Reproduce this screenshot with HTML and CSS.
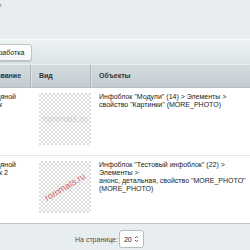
FILE: index.html
```html
<!DOCTYPE html>
<html lang="ru">
<head>
    <meta charset="UTF-8">
    <title>Водяные знаки</title>
    <link rel="stylesheet" href="styles.css">
</head>
<body>
    <div class="page">
        <div class="crumbs">Настройки</div>

        <div class="toolbar">
            <span class="tab-button">Разработка</span>
        </div>

        <div class="grid">
            <div class="grid-head">
                <div class="head-cell">Название</div>
                <div class="head-cell">Вид</div>
                <div class="head-cell">Объекты</div>
            </div>

            <div class="grid-row">
                <div class="cell">Водяной<br>знак</div>
                <div class="cell">
                    <div class="preview">
                        <span class="mark mark-flat">rommats.ru</span>
                    </div>
                </div>
                <div class="cell cell-objects">Инфоблок "Модули" (14) &gt; Элементы &gt;<br>свойство "Картинки" (MORE_PHOTO)</div>
            </div>

            <div class="grid-row">
                <div class="cell">Водяной<br>знак 2</div>
                <div class="cell">
                    <div class="preview">
                        <span class="mark mark-tilt">rommats.ru</span>
                    </div>
                </div>
                <div class="cell cell-objects">Инфоблок "Тестовый инфоблок" (22) &gt;<br>Элементы &gt;<br>анонс, детальная, свойство "MORE_PHOTO"<br>(MORE_PHOTO)</div>
            </div>
        </div>

        <div class="pager">
            <span class="pager-label">На странице:</span>
            <span class="pager-select">20
                <svg width="5" height="8" viewBox="0 0 5 8">
                    <path d="M1 3 L2.5 1.5 L4 3 M1 5 L2.5 6.5 L4 5" fill="none" stroke="#444" stroke-width="0.9"/>
                </svg>
            </span>
        </div>
    </div>
</body>
</html>
```

FILE: styles.css
```css
* {
    margin: 0;
    padding: 0;
    box-sizing: border-box;
}

body {
    overflow: hidden;
    background: #e8eef0;
    font-family: "Liberation Sans", Arial, sans-serif;
    font-size: 7px;
    color: #222;
}

.page {
    margin-left: -20px;
    width: 270px;
}

.crumbs {
    height: 39px;
    padding-top: 2px;
    margin-left: -8px;
    font-size: 6px;
    color: #5f7380;
}

.toolbar {
    height: 25px;
    padding: 4px 0 0 0;
    border-top: 1px solid #f7fafa;
    background: linear-gradient(#eef3f4, #dbe3e5);
}

.tab-button {
    display: inline-block;
    height: 17px;
    line-height: 16px;
    padding: 0 7px;
    margin-left: -1px;
    background: linear-gradient(#ffffff, #f4f6f6);
    border: 1px solid #b9c4c7;
    border-radius: 3px;
    box-shadow: 0 1px 1px rgba(0, 0, 0, 0.15);
    color: #222;
}

.grid {
    background: #fff;
    border-bottom: 1px solid #bcc6c9;
}

.grid-head,
.grid-row {
    display: grid;
    grid-template-columns: 51px 60px 1fr;
}

.grid-head {
    height: 24px;
    background: linear-gradient(#d3dcdf, #c3cdd1);
    border-top: 1px solid #e7eced;
    border-bottom: 1px solid #b4bfc3;
}

.head-cell {
    padding: 0 8px;
    line-height: 22px;
    font-weight: bold;
    color: #2e3438;
    border-right: 1px solid #a9b4b8;
    box-shadow: 1px 0 0 #dfe5e7;
}

.head-cell:last-child {
    border-right: none;
    box-shadow: none;
}

.grid-row {
    border-bottom: 1px solid #e1e6e8;
}

.grid-row:last-child {
    border-bottom: none;
}

.cell {
    padding: 5px 8px 10px;
    line-height: 8px;
    color: #222;
}

.cell-objects {
    white-space: nowrap;
}

.preview {
    position: relative;
    width: 52px;
    height: 52px;
    overflow: hidden;
    background-color: #fff;
    background-image:
        linear-gradient(45deg, #dcdcdc 25%, transparent 25%, transparent 75%, #dcdcdc 75%),
        linear-gradient(45deg, #dcdcdc 25%, transparent 25%, transparent 75%, #dcdcdc 75%);
    background-size: 4px 4px;
    background-position: 0 0, 2px 2px;
}

.mark {
    position: absolute;
    left: 50%;
    top: 50%;
    white-space: nowrap;
    font-size: 9px;
}

.mark-flat {
    color: rgba(150, 150, 150, 0.35);
    transform: translate(-50%, -50%);
}

.mark-tilt {
    color: rgba(200, 60, 60, 0.8);
    transform: translate(-50%, -50%) rotate(-31deg);
}

.pager {
    display: flex;
    align-items: center;
    gap: 1px;
    padding: 6px 0 0 95px;
}

.pager-label {
    color: #4a4f52;
}

.pager-select {
    display: flex;
    align-items: center;
    justify-content: space-between;
    width: 25px;
    height: 18px;
    padding: 0 4px;
    background: #fff;
    border: 1px solid #b4bec2;
    border-radius: 3px;
    color: #222;
}
```
